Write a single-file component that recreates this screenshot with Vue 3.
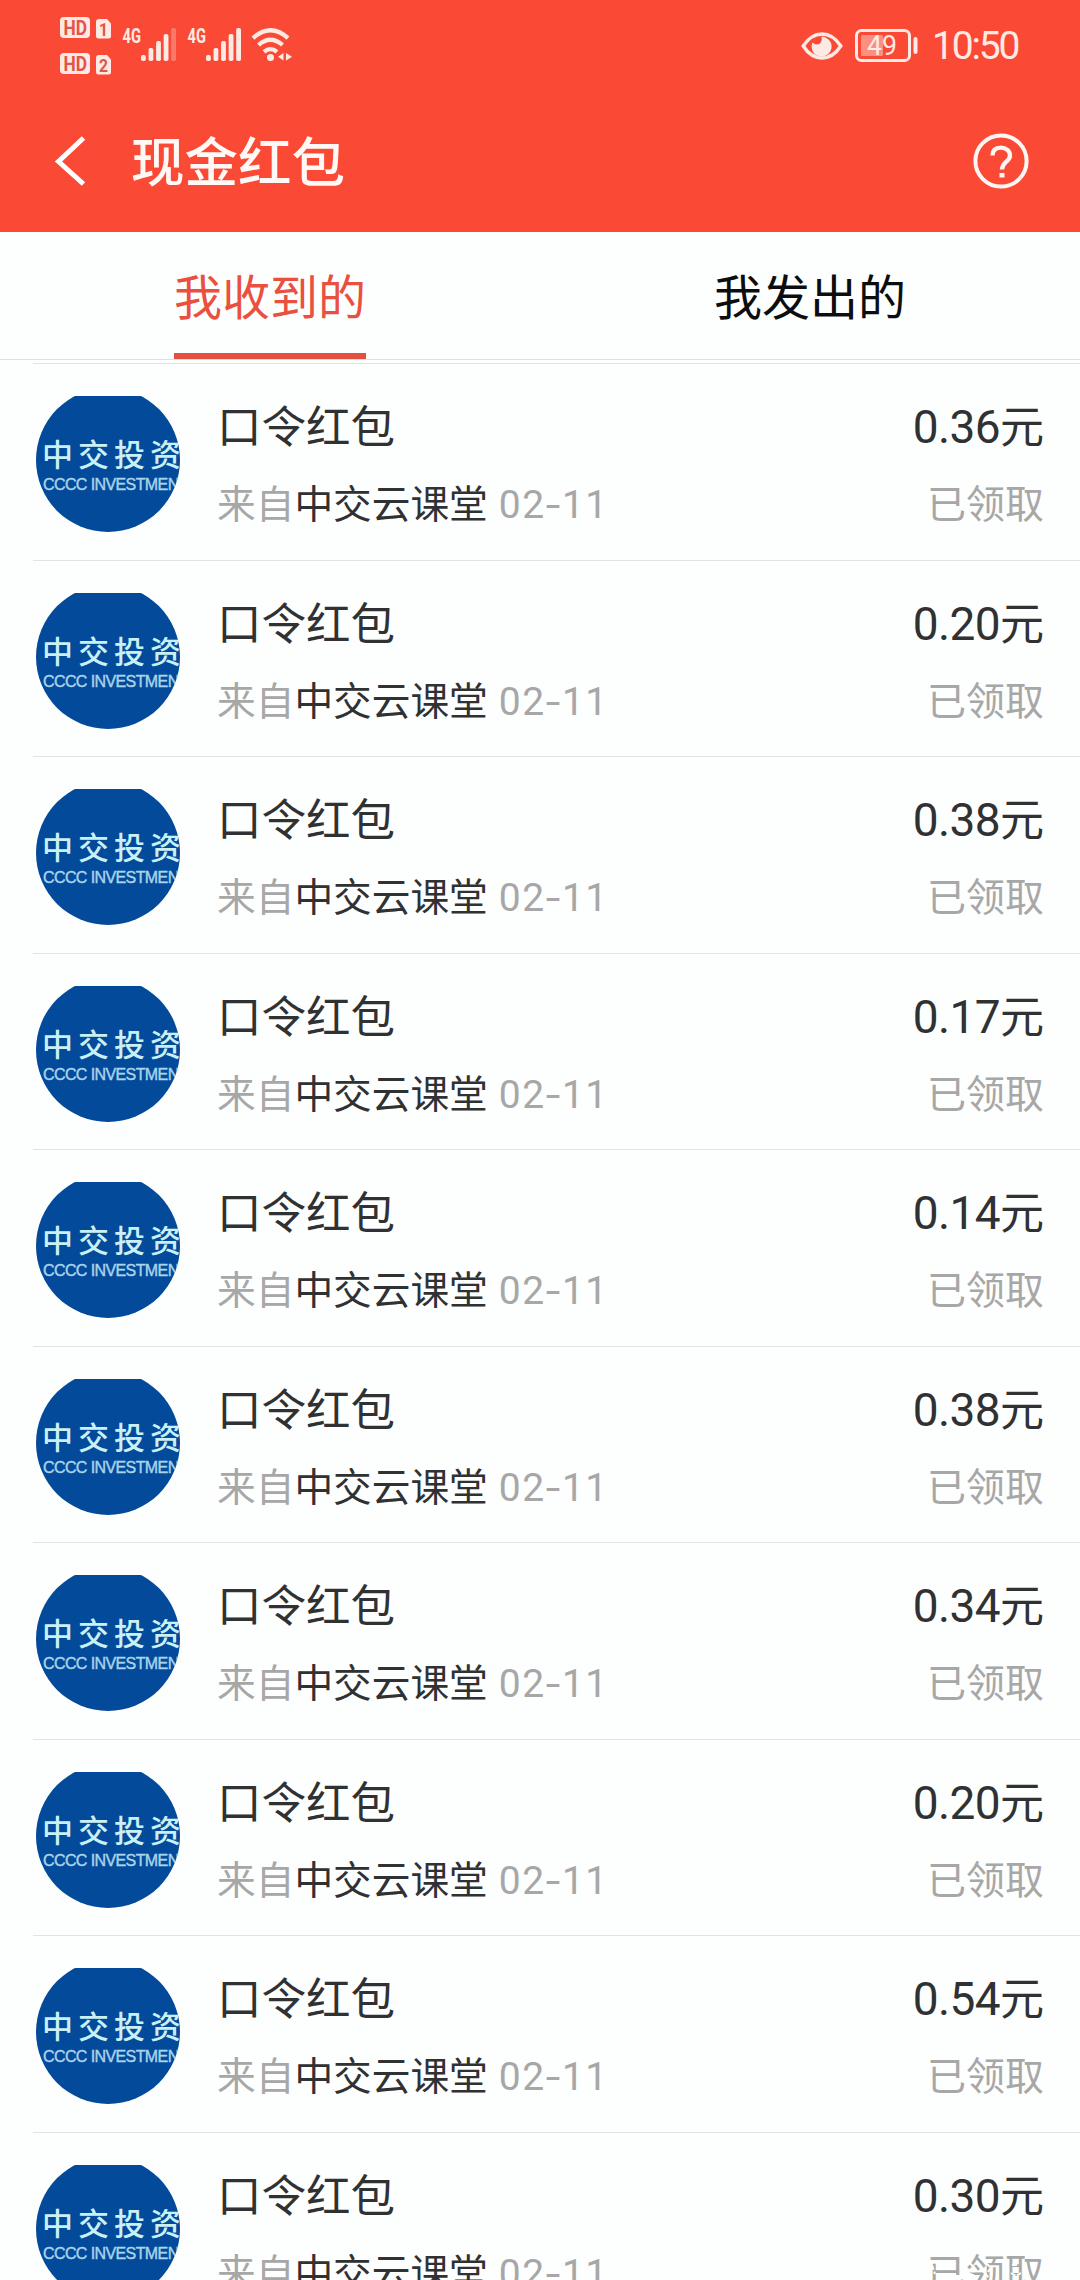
<script setup>
const amounts = ['0.36', '0.20', '0.38', '0.17', '0.14', '0.38', '0.34', '0.20', '0.54', '0.30']
const records = amounts.map((amount, id) => ({ id, amount, title: '口令红包', sender: '中交云课堂', date: ['02', '-', '11'] }))
const wave = [6, 13, 20, 27, 33]
</script>

<template>
  <div class="screen">
    <header class="top">
      <div class="status">
        <svg class="network" width="230" height="64" viewBox="55 14 230 64">
          <g v-for="n in 2" :key="n" :transform="`translate(0 ${(n - 1) * 36})`">
            <rect x="60" y="17" width="30" height="21" rx="4" fill="#fdeae4" />
            <text x="63.500" y="34.800" class="hd" textLength="23.500" lengthAdjust="spacingAndGlyphs">HD</text>
            <path d="M99 19h8l4 4.500V36a2.500 2.500 0 0 1-2.500 2.500h-10A2.500 2.500 0 0 1 96 36V22a3 3 0 0 1 3-3z" fill="#fdeae4" />
            <text x="99" y="35.600" class="sim" textLength="9" lengthAdjust="spacingAndGlyphs">{{ n }}</text>
          </g>
          <g v-for="s in 2" :key="'s' + s" :transform="`translate(${(s - 1) * 65} 0)`">
            <text x="122.600" y="42.800" class="net" textLength="18.400" lengthAdjust="spacingAndGlyphs">4G</text>
            <rect
              v-for="(h, i) in wave" :key="i" :x="141 + i * 7.55" :y="61 - h" width="4.800" :height="h" rx="1.800"
              fill="#fdeae4" :opacity="s === 1 && i === 4 ? 0.3 : 1"
            />
          </g>
          <g fill="none" stroke="#fdeae4" stroke-width="4.300">
            <path d="M253 38.200Q270.500 22.500 288 38.200" />
            <path d="M258.500 45Q270.500 34.500 282.500 45" />
            <path d="M264 51.800Q270.500 46.500 277 51.800" />
          </g>
          <circle cx="270.500" cy="57.500" r="3.500" fill="#fdeae4" />
          <path d="M283.500 53v7.500l-5.500-3.800zM286 53v7.500l6-3.800z" fill="#fdeae4" />
        </svg>
        <div class="right-status">
          <svg width="42" height="30" viewBox="0 0 42 30">
            <path d="M2.200 15Q10 3 21 3T39.800 15Q32 27 21 27T2.200 15z" fill="none" stroke="#fdeae4" stroke-width="3.400" />
            <path d="M20.500 5.500C22 13 16 15.500 11.500 11.500A10 10 0 1 0 30 12Q27 6 20.500 5.500z" fill="#fdeae4" />
          </svg>
          <svg width="64" height="34" viewBox="0 0 64 34">
            <rect x="1.500" y="1.500" width="53" height="30" rx="5" fill="none" stroke="#fdeae4" stroke-width="3" />
            <rect x="6" y="6" width="22" height="21" rx="1.500" fill="#fb9080" />
            <text x="12" y="26" class="level" textLength="30" lengthAdjust="spacingAndGlyphs">49</text>
            <path d="M60.500 10v13" stroke="#fdeae4" stroke-width="4" stroke-linecap="round" />
          </svg>
          <span class="clock">10:50</span>
        </div>
      </div>
      <div class="bar">
        <svg class="back" width="32" height="52" viewBox="0 0 32 52">
          <path d="M29.500 3L4.500 26.500L29.500 49" fill="none" stroke="#fff" stroke-width="5" />
        </svg>
        <h1>现金红包</h1>
        <svg class="help" width="56" height="56" viewBox="0 0 56 56" fill="none" stroke="#fff6f3">
          <circle cx="28" cy="28" r="25.600" stroke-width="4" />
          <path d="M19.500 22.500C19.500 17 23 14.600 28 14.600S37 18 37 22.500C37 29 29 28.500 29 36.500" stroke-width="4.300" />
          <path d="M29 40v4.500" stroke-width="5" />
        </svg>
      </div>
    </header>
    <nav class="tabs">
      <a class="tab active">我收到的</a>
      <a class="tab">我发出的</a>
    </nav>
    <ul class="list">
      <li v-for="r in records" :key="r.id" class="row">
        <div class="avatar">
          <span class="brand">中交投资</span>
          <span class="brand-en">CCCC INVESTMEN</span>
        </div>
        <div class="info">
          <div class="title">{{ r.title }}</div>
          <div class="sub">来自<b>{{ r.sender }}</b><span class="date">{{ r.date[0] }}<i>{{ r.date[1] }}</i>{{ r.date[2] }}</span></div>
        </div>
        <div class="value">
          <div class="amount"><span>{{ r.amount }}</span>元</div>
          <div class="state">
            已领取
            <svg v-if="r.id === records.length - 1" class="specks" width="114" height="30" viewBox="0 0 114 30">
              <path
                d="M2 6l3 9M7 15h20M40 4l5 6l-5 5l8 3M56 4l5 5l-5 6l4 6M82 6h7M81 14l5 3l5-3M82 22h8"
                fill="none" stroke="#fdfefe" stroke-width="2" stroke-dasharray="5 2"
              />
            </svg>
          </div>
        </div>
      </li>
    </ul>
  </div>
</template>

<style>
body { margin: 0; background: #fdfefe; }
</style>

<style scoped>
.screen {
  width: 1080px;
  height: 2280px;
  overflow: hidden;
  background: #fdfefe;
  font-family: "Noto Sans CJK SC", sans-serif;
  color: #303133;
}
.top { height: 232px; background: #fa4a35; display: flex; flex-direction: column; }
.status { height: 90px; display: flex; justify-content: space-between; padding: 0 60px 0 55px; }
.network { margin-top: 14px; overflow: visible; }
.hd, .sim, .net, .level { font-family: Roboto, sans-serif; }
.hd { font-size: 21px; font-weight: 700; fill: #e35446; }
.sim { font-size: 19px; font-weight: 700; fill: #e35446; }
.net { font-size: 19.500px; font-weight: 700; fill: #fdeae4; }
.level { font-size: 27px; fill: #fdeae4; }
.right-status { height: 92px; display: flex; align-items: center; }
.right-status svg:nth-child(2) { margin-left: 12px; }
.clock { width: 88px; margin-left: 13px; font: 400 39px/94px Roboto, sans-serif; letter-spacing: -2.200px; color: #fdeae4; white-space: nowrap; }
.bar { height: 142px; display: flex; align-items: center; padding: 0 51px 0 54px; }
h1 { margin: -4px 0 0 45px; font-size: 53.500px; line-height: 60px; font-weight: 500; color: #fff8f5; flex: 1; -webkit-text-stroke: 0; }
.tabs { height: 127px; display: flex; justify-content: space-around; border-bottom: 1px solid #dedfdf; }
.tab { box-sizing: border-box; height: 127px; font-size: 48px; line-height: 125px; color: #0b0d0e; }
.active { color: #e9503f; border-bottom: 6px solid #e4503e; }
.list { list-style: none; margin: 3px 0 0; padding: 0; }
.row { box-sizing: border-box; height: 196.500px; margin-left: 33px; padding: 24px 36px 0 3px; border-top: 1.500px solid #e2e4e4; display: flex; }
.avatar {
  width: 144px; height: 144px; border-radius: 50%; overflow: hidden; flex: none;
  background: linear-gradient(#fdfefe 8px, #034a9b 8px);
  color: #c9f0f5; white-space: nowrap;
}
.brand { display: block; margin: 48px 0 0 6px; font-size: 31px; line-height: 34px; letter-spacing: 5px; font-weight: 500; }
.brand-en { display: block; margin: 6px 0 0 7px; font: 16px/18px "Liberation Sans", sans-serif; letter-spacing: -0.600px; color: #a9d4ea; -webkit-text-stroke: 0.400px #a9d4ea; }
.info { margin-left: 37px; flex: 1; }
.title { font-size: 44.500px; line-height: 60px; margin-top: 6px; }
.sub { font-size: 38.700px; line-height: 56px; margin-top: 19px; color: #a7a7a7; white-space: nowrap; }
.sub b { font-weight: 400; color: #303133; }
.date { font-family: Roboto, sans-serif; font-size: 39px; margin-left: 11px; letter-spacing: 1.500px; }
.date i { display: inline-block; font-style: normal; transform: scaleX(1.350); margin: 0 2px; }
.value { text-align: right; }
.amount { font-size: 44px; line-height: 60px; margin-top: 6px; }
.amount span { font-family: Roboto, sans-serif; font-size: 46px; letter-spacing: -0.600px; }
.state { position: relative; font-size: 39px; line-height: 56px; margin-top: 16px; color: #a7a7a7; }
.specks { position: absolute; right: 0; top: 17px; }
</style>
